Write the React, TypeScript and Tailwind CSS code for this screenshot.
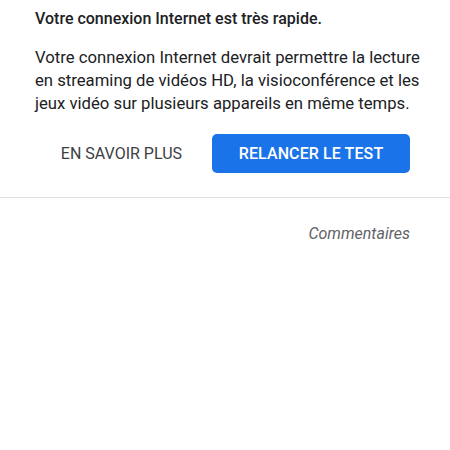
export default function App() {
  return (
    <div className="w-[450px] h-[450px] bg-white font-['Roboto',sans-serif]">
      {/* ── Résultat ── */}
      <div className="pl-[35px] pr-[15px] pt-[8px]">
        <p className="text-[16px] leading-[22px] font-medium text-[#202124]">
          Votre connexion Internet est très rapide.
        </p>
        <p className="mt-[16px] text-[16.7px] leading-[23px] text-[#202124]">
          Votre connexion Internet devrait permettre la lecture en streaming de vidéos HD, la visioconférence et les jeux vidéo sur plusieurs appareils en même temps.
        </p>
      </div>

      {/* ── Actions ── */}
      <div className="flex justify-end items-center gap-[30px] pr-[40px] mt-[19px]">
        <button className="text-[16px] text-[#3c4043]">
          EN SAVOIR PLUS
        </button>
        <button className="w-[198px] h-[39px] rounded-[5px] bg-[#1a73e8] text-white text-[16px] font-medium tracking-[0.1px]">
          RELANCER LE TEST
        </button>
      </div>

      <div className="mt-[24px] h-px bg-[#e0e0e0]" />

      <div className="flex justify-end pr-[40px] pt-[25px]">
        <span className="text-[16px] leading-[22px] italic text-[#5f6368]">Commentaires</span>
      </div>
    </div>
  );
}
